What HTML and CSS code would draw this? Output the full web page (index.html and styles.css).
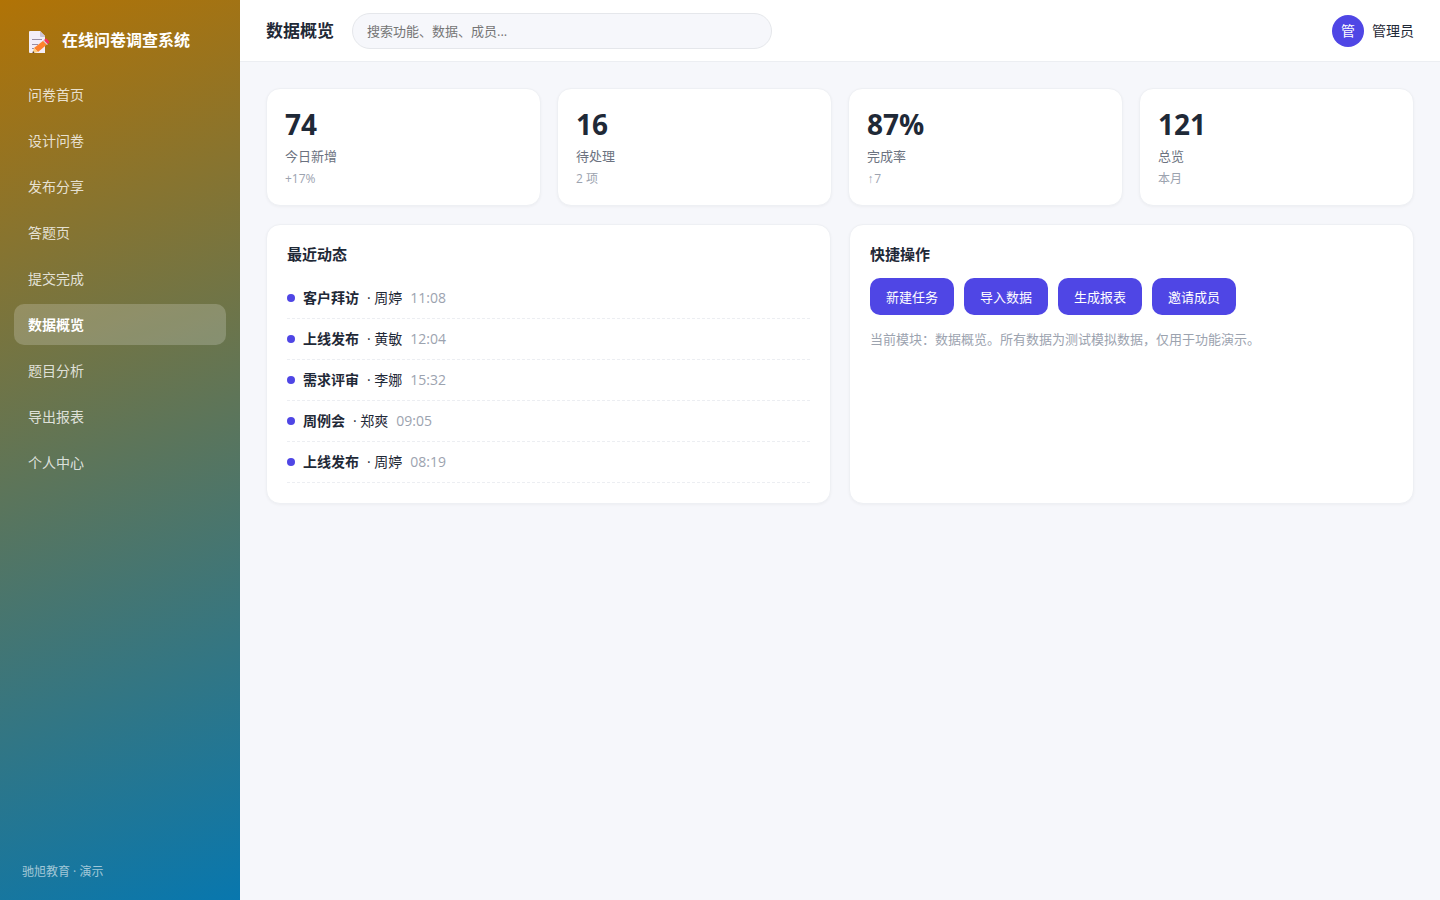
FILE: index.html
```html
<!DOCTYPE html>
<html lang="zh-CN">
<head>
    <meta charset="UTF-8">
    <meta name="viewport" content="width=device-width, initial-scale=1.0">
    <title>在线问卷调查系统 - 数据概览</title>
    <link rel="stylesheet" href="styles.css">
</head>
<body>
    <div class="layout">
        <aside class="sidebar">
            <div class="brand">
                <svg class="logo" viewBox="0 0 22 22" aria-hidden="true">
                    <path fill="#f3eef8" d="M2 0h10l5 5v17H2a1 1 0 0 1-1-1V1a1 1 0 0 1 1-1z"/>
                    <path fill="#cdc4d6" d="M12 0l5 5v1h-4a1 1 0 0 1-1-1z"/>
                    <path stroke="#998ea4" d="M4 8.500h10M4 13.500h6M4 17.500h2"/>
                    <path fill="#ff822d" d="M15.500 9.500l3.500 4-9 7.500-4-4z"/>
                    <path fill="#ffce7c" d="M6 17l4 4-5.500 1z"/>
                    <path fill="#402a32" d="M5 20l1.500 1.700-2 .3z"/>
                    <path fill="#d3d3d3" d="M15 10l1-1 4 4-1 1z"/>
                    <path fill="#f8315f" d="M16 9l1.500-1.200a1 1 0 0 1 1.400.1l2.200 2.600a1 1 0 0 1-.1 1.400L19.700 13z"/>
                </svg>
                <span>在线问卷调查系统</span>
            </div>
            <nav class="menu">
                <a href="#">问卷首页</a>
                <a href="#">设计问卷</a>
                <a href="#">发布分享</a>
                <a href="#">答题页</a>
                <a href="#">提交完成</a>
                <a href="#" class="active">数据概览</a>
                <a href="#">题目分析</a>
                <a href="#">导出报表</a>
                <a href="#">个人中心</a>
            </nav>
            <div class="side-foot">驰旭教育 · 演示</div>
        </aside>

        <div class="main">
            <header class="topbar">
                <h1>数据概览</h1>
                <input class="search" type="text" placeholder="搜索功能、数据、成员..." aria-label="搜索">
                <div class="user">
                    <div class="avatar">管</div>
                    <span>管理员</span>
                </div>
            </header>

            <main class="content">
                <section class="stats">
                    <div class="card">
                        <div class="num">74</div>
                        <div class="label">今日新增</div>
                        <div class="sub">+17%</div>
                    </div>
                    <div class="card">
                        <div class="num">16</div>
                        <div class="label">待处理</div>
                        <div class="sub">2 项</div>
                    </div>
                    <div class="card">
                        <div class="num">87%</div>
                        <div class="label">完成率</div>
                        <div class="sub"><span class="arrow">↑</span>7</div>
                    </div>
                    <div class="card">
                        <div class="num">121</div>
                        <div class="label">总览</div>
                        <div class="sub">本月</div>
                    </div>
                </section>

                <div class="panels">
                    <section class="panel">
                        <h2>最近动态</h2>
                        <ul class="feed">
                            <li><i class="dot"></i><b>客户拜访</b><span>· 周婷</span><time>11:08</time></li>
                            <li><i class="dot"></i><b>上线发布</b><span>· 黄敏</span><time>12:04</time></li>
                            <li><i class="dot"></i><b>需求评审</b><span>· 李娜</span><time>15:32</time></li>
                            <li><i class="dot"></i><b>周例会</b><span>· 郑爽</span><time>09:05</time></li>
                            <li><i class="dot"></i><b>上线发布</b><span>· 周婷</span><time>08:19</time></li>
                        </ul>
                    </section>
                    <section class="panel">
                        <h2>快捷操作</h2>
                        <div class="actions">
                            <button type="button">新建任务</button>
                            <button type="button">导入数据</button>
                            <button type="button">生成报表</button>
                            <button type="button">邀请成员</button>
                        </div>
                        <p class="hint">当前模块：数据概览。所有数据为测试模拟数据，仅用于功能演示。</p>
                    </section>
                </div>
            </main>
        </div>
    </div>
</body>
</html>
```
FILE: styles.css
```css
*{
    margin: 0;
    padding: 0;
    box-sizing: border-box;
}
body{
    font-family: "Open Sans", "Noto Sans CJK SC", sans-serif;
    font-size: 14px;
    line-height: 20px;
    color: #1f2937;
    background-color: #f6f7fb;
}
a{text-decoration: none;}
ul{list-style: none;}
button, input{font-family: inherit;}

.layout{
    display: flex;
    min-height: 100vh;
}

/* 侧边栏 */
.sidebar{
    display: flex;
    flex-direction: column;
    flex-shrink: 0;
    width: 240px;
    padding: 24px 14px 18px;
    color: #fff;
    background: linear-gradient(160deg, #b17306, #0877ae);
}
.brand{
    display: flex;
    align-items: center;
    gap: 12px;
    padding: 0 14px;
    margin-bottom: 18px;
    font-size: 16px;
    font-weight: 700;
    line-height: 32px;
}
.logo{
    width: 22px;
    height: 22px;
    margin-top: 4px;
}
.menu{
    display: flex;
    flex-direction: column;
    gap: 5px;
}
.menu a{
    padding: 10px 14px;
    line-height: 21px;
    border-radius: 10px;
    color: rgba(255,255,255,0.8);
}
.menu a.active{
    font-weight: 700;
    color: #fff;
    background-color: rgba(255,255,255,0.2);
}
.side-foot{
    margin-top: auto;
    padding: 0 8px;
    font-size: 12px;
    color: rgba(255,255,255,0.6);
}

/* 顶栏 */
.main{
    flex: 1;
    min-width: 0;
}
.topbar{
    display: flex;
    align-items: center;
    gap: 18px;
    height: 62px;
    padding: 0 26px;
    background-color: #fff;
    border-bottom: 1px solid #eceef2;
}
.topbar h1{
    font-size: 17px;
    font-weight: 700;
}
.search{
    width: 420px;
    height: 36px;
    padding: 0 14px;
    font-size: 13px;
    border: 1px solid #e5e7eb;
    border-radius: 18px;
    background-color: #f6f7fb;
    outline: none;
}
.search::placeholder{color: #757575;}
.user{
    display: flex;
    align-items: center;
    gap: 8px;
    margin-left: auto;
}
.avatar{
    width: 32px;
    height: 32px;
    line-height: 32px;
    text-align: center;
    border-radius: 50%;
    color: #fff;
    background-color: #4f46e5;
}

/* 内容 */
.content{padding: 26px;}
.stats{
    display: grid;
    grid-template-columns: repeat(4, 1fr);
    gap: 16px;
    margin-bottom: 18px;
}
.card, .panel{
    background-color: #fff;
    border: 1px solid #eef0f4;
    border-radius: 14px;
    box-shadow: 0 1px 3px rgba(0,0,0,0.04);
}
.card{padding: 18px 18px 16px;}
.num{
    margin-bottom: 5px;
    font-size: 28px;
    font-weight: 700;
    line-height: 34px;
}
.label{
    margin-bottom: 3px;
    font-size: 13px;
    color: #6b7280;
}
.sub{
    font-size: 12px;
    color: #9ca3af;
}
.arrow{
    font-family: "Liberation Mono", monospace;
    line-height: 1;
}
.panels{
    display: grid;
    grid-template-columns: 1fr 1fr;
    gap: 18px;
}
.panel{padding: 19px 20px 20px;}
.panel h2{
    margin-bottom: 14px;
    font-size: 15px;
    font-weight: 700;
}
.feed li{
    display: flex;
    align-items: center;
    gap: 8px;
    padding: 9px 0;
    line-height: 22px;
    border-bottom: 1px dashed #eceef2;
}
.dot{
    width: 8px;
    height: 8px;
    border-radius: 50%;
    background-color: #4f46e5;
}
.feed time{color: #9ca3af;}
.actions{
    display: flex;
    flex-wrap: wrap;
    gap: 10px;
    margin-bottom: 14px;
}
.actions button{
    height: 37px;
    padding: 0 16px;
    font-size: 13px;
    border: none;
    border-radius: 10px;
    color: #fff;
    background-color: #4f46e5;
    cursor: pointer;
}
.hint{
    font-size: 13px;
    color: #9ca3af;
}
```
